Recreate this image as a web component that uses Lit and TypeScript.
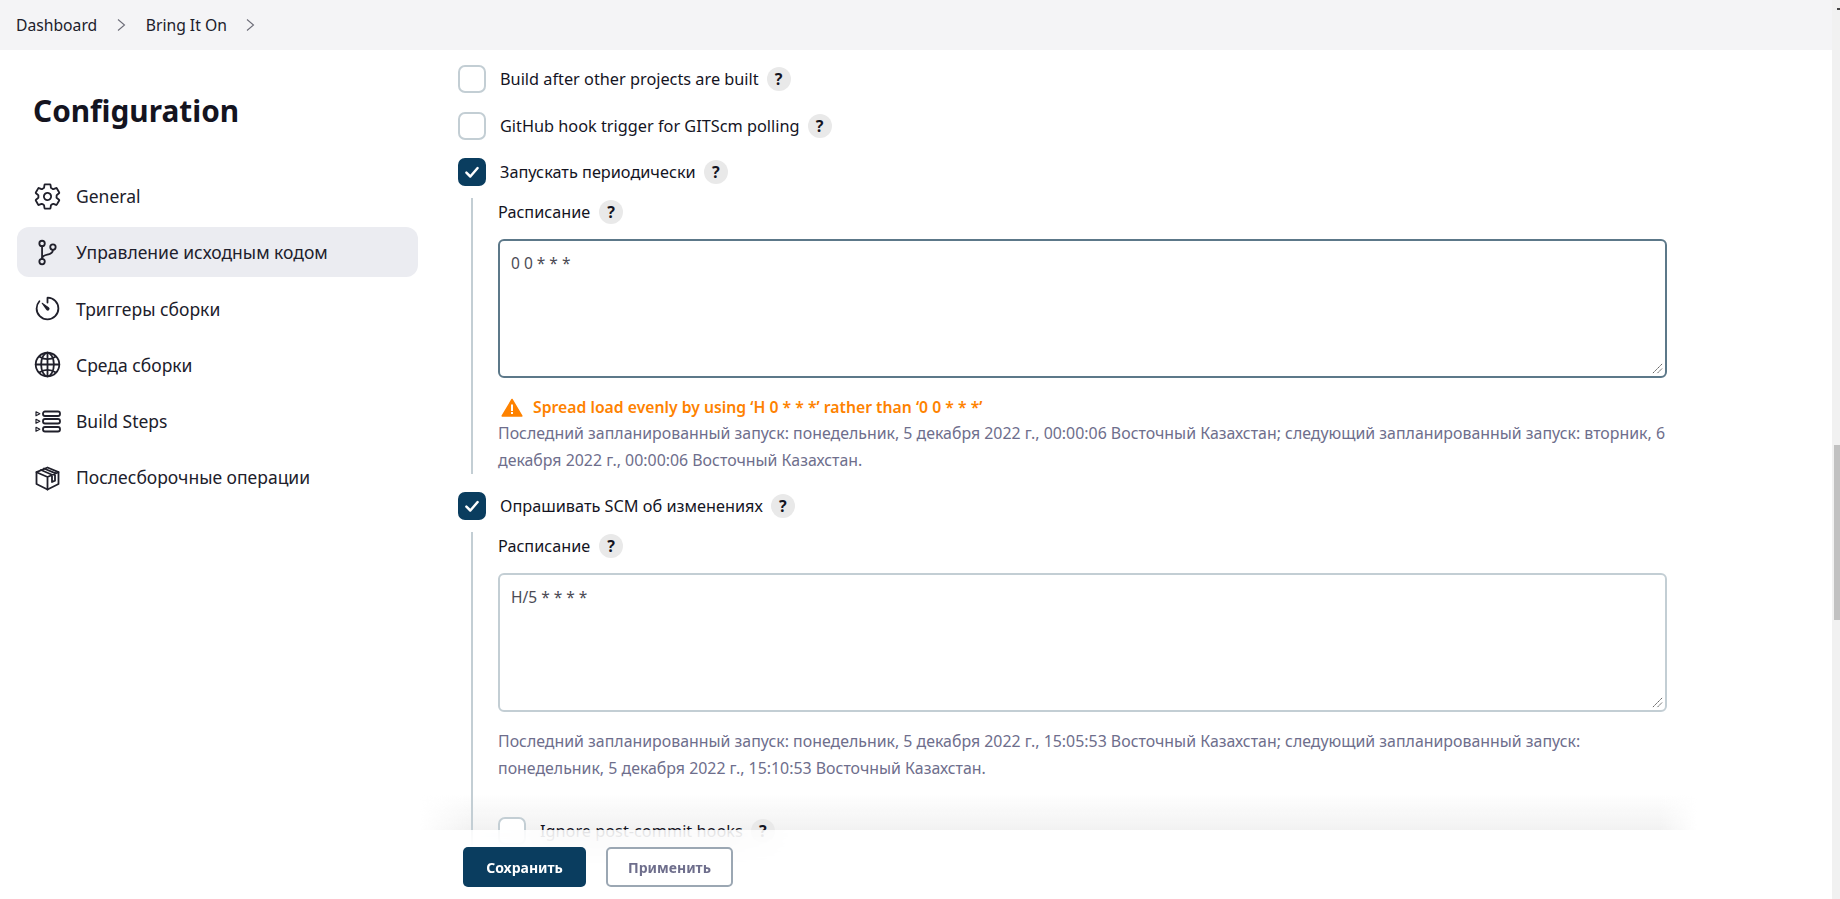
import { LitElement, html, css, svg } from 'lit';
import { customElement } from 'lit/decorators.js';

const ion = '0 0 512 512';
const icons: Record<string, { box: string; body: unknown }> = {
  gear: {
    box: ion,
    body: svg`<path d="M262.29 192.31a64 64 0 1057.4 57.4 64.13 64.13 0 00-57.4-57.4zM416.39 256a154.34 154.34 0 01-1.53 20.79l45.21 35.46a10.81 10.81 0 012.45 13.75l-42.77 74a10.81 10.81 0 01-13.14 4.59l-44.9-18.08a16.11 16.11 0 00-15.17 1.75A164.48 164.48 0 01325 400.8a15.94 15.94 0 00-8.82 12.14l-6.73 47.89a11.08 11.08 0 01-10.68 9.17h-85.54a11.11 11.11 0 01-10.69-8.87l-6.72-47.82a16.07 16.07 0 00-9-12.22 155.3 155.3 0 01-21.46-12.57 16 16 0 00-15.11-1.71l-44.89 18.07a10.81 10.81 0 01-13.14-4.58l-42.77-74a10.8 10.8 0 012.45-13.75l38.21-30a16.05 16.05 0 006-14.08c-.36-4.17-.58-8.33-.58-12.5s.21-8.27.58-12.35a16 16 0 00-6.07-13.94l-38.19-30A10.81 10.81 0 0149.48 186l42.77-74a10.81 10.81 0 0113.14-4.59l44.9 18.08a16.11 16.11 0 0015.17-1.75A164.48 164.48 0 01187 111.2a15.94 15.94 0 008.82-12.14l6.73-47.89A11.08 11.08 0 01213.23 42h85.54a11.11 11.11 0 0110.69 8.87l6.72 47.82a16.07 16.07 0 009 12.22 155.3 155.3 0 0121.46 12.57 16 16 0 0015.11 1.71l44.89-18.07a10.81 10.81 0 0113.14 4.58l42.77 74a10.8 10.8 0 01-2.45 13.75l-38.21 30a16.05 16.05 0 00-6.05 14.08c.33 4.14.55 8.3.55 12.47z"/>`,
  },
  branch: {
    box: ion,
    body: svg`<circle cx="160" cy="96" r="48"/><circle cx="160" cy="416" r="48"/><path d="M160 368V144"/><circle cx="352" cy="160" r="48"/><path d="M352 208c0 128-192 48-192 160"/>`,
  },
  timer: {
    box: ion,
    body: svg`<path d="M112.91 128A191.85 191.85 0 0064 254c-1.18 106.35 85.65 193.8 192 194 106.2.2 192-85.83 192-192 0-104.54-83.55-189.61-187.5-192a4.36 4.36 0 00-4.5 4.37V152"/><path fill="#20202b" stroke="none" d="M233.38 278.63l-79-113a8.13 8.13 0 0111.32-11.32l113 79a32.5 32.5 0 01-37.25 53.26 33.21 33.21 0 01-8.07-8.06z"/>`,
  },
  globe: {
    box: ion,
    body: svg`<path d="M256 48C141.13 48 48 141.13 48 256s93.13 208 208 208 208-93.13 208-208S370.87 48 256 48z"/><path d="M256 48c-58.07 0-112.67 93.13-112.67 208S197.93 464 256 464s112.67-93.13 112.67-208S314.07 48 256 48z"/><path d="M117.33 117.33c38.24 27.15 86.38 43.34 138.67 43.34s100.43-16.19 138.67-43.34M394.67 394.67c-38.24-27.15-86.38-43.34-138.67-43.34s-100.43 16.19-138.67 43.34"/><path d="M256 48v416M464 256H48"/>`,
  },
  steps: {
    box: '0 0 29 29',
    body: svg`<rect x="10" y="4.500" width="17" height="4.500" rx="2"/><rect x="10" y="12" width="17" height="4.500" rx="2"/><rect x="10" y="20" width="17" height="4.500" rx="2"/><path stroke-width="1.200" d="M3 4.800l3.800 2-3.800 2zM3 12.300l3.800 2-3.800 2zM3 20.300l3.800 2-3.800 2z"/>`,
  },
  box: {
    box: '0 0 29 29',
    body: svg`<path d="M14.500 4.500l11 4.700V21l-11 5.500L3.500 21V9.200z"/><path d="M3.500 9.200l11 4.800 11-4.800M14.500 14v12.500M8 7l11 4.800V19l3-1.300v-7.600L11 5.500"/>`,
  },
};

const navItems = [
  { icon: 'gear', label: 'General' },
  { icon: 'branch', label: 'Управление исходным кодом', active: true },
  { icon: 'timer', label: 'Триггеры сборки' },
  { icon: 'globe', label: 'Среда сборки' },
  { icon: 'steps', label: 'Build Steps' },
  { icon: 'box', label: 'Послесборочные операции' },
];

@customElement('app-root')
export class AppRoot extends LitElement {
  static styles = css`
    :host {
      display: flex;
      width: 1840px;
      height: 899px;
      overflow: hidden;
      background: #fff;
      color: #14141f;
      font-family: 'Noto Sans', 'Open Sans', sans-serif;
      font-size: 16px;
    }
    .page {
      flex: 1;
      min-width: 0;
      display: flex;
      flex-direction: column;
      position: relative;
    }
    .scrollbar {
      width: 8px;
      background: #f1f1f1;
      display: flex;
      flex-direction: column;
      align-items: flex-end;
    }
    .arrow {
      width: 3px;
      height: 2px;
      margin-top: 8px;
      background: #444;
    }
    .thumb {
      width: 6px;
      height: 175px;
      margin-top: 435px;
      background: #c1c1c1;
    }
    .topbar {
      height: 50px;
      flex: none;
      display: flex;
      align-items: center;
      padding-left: 16px;
      background: #f4f4f6;
      font-size: 15.700px;
      color: #20202b;
    }
    .chev {
      width: 9px;
      height: 14px;
      margin: 0 20px 0 19.500px;
      fill: none;
      stroke: #6d6d78;
      stroke-width: 1.100;
    }
    .body {
      flex: 1;
      min-height: 0;
      display: flex;
      overflow: hidden;
      position: relative;
      z-index: 1;
    }
    .side {
      width: 418px;
      flex: none;
      padding: 41px 0 0 17px;
      box-sizing: border-box;
    }
    h1 {
      margin: 0 0 40px 16px;
      font-size: 29.800px;
      line-height: 40px;
      font-weight: 700;
    }
    nav {
      display: flex;
      flex-direction: column;
      gap: 6.300px;
    }
    .nav-item {
      height: 50px;
      display: flex;
      align-items: center;
      gap: 14.500px;
      padding-left: 15.500px;
      border-radius: 12px;
      font-size: 17.500px;
      color: #20202b;
    }
    .nav-item.active {
      background: #ebecf1;
    }
    .nav-item svg {
      width: 29px;
      height: 29px;
      flex: none;
      fill: none;
      stroke: #20202b;
      stroke-linecap: round;
      stroke-linejoin: round;
    }
    .nav-item svg.ion {
      stroke-width: 32;
    }
    .nav-item svg.px {
      stroke-width: 1.800;
    }
    main {
      flex: 1;
      min-width: 0;
      padding: 15px 165px 0 40px;
    }
    .row {
      height: 28px;
      display: flex;
      align-items: center;
      gap: 14px;
      margin-bottom: 18.700px;
    }
    .check {
      width: 24px;
      height: 24px;
      flex: none;
      border: 2px solid #c3ced4;
      border-radius: 7px;
      background: #fff;
      display: flex;
      align-items: center;
      justify-content: center;
    }
    .check.on {
      background: #0a3d5f;
      border-color: #0a3d5f;
    }
    .check svg {
      width: 18px;
      height: 18px;
      fill: none;
      stroke: #fff;
      stroke-width: 2.200;
      stroke-linecap: round;
      stroke-linejoin: round;
    }
    .label {
      display: flex;
      align-items: center;
      gap: 8px;
      font-size: 16.300px;
    }
    .help {
      width: 24px;
      height: 24px;
      flex: none;
      display: flex;
      align-items: center;
      justify-content: center;
      border-radius: 50%;
      background: #e9e9e9;
      font-size: 16px;
      font-weight: 700;
      color: #14141f;
    }
    .nested {
      margin-left: 13px;
      padding-left: 25px;
      border-left: 2px solid #c3ced4;
    }
    .nested.first {
      margin-top: -7px;
      margin-bottom: 18px;
    }
    .nested.second {
      margin-top: -6.700px;
    }
    .nested.second .row {
      margin: 35px 0 0;
    }
    .field-label {
      height: 28px;
      display: flex;
      align-items: center;
      gap: 9px;
      margin-bottom: 13px;
      font-size: 16.200px;
    }
    .area {
      height: 139px;
      box-sizing: border-box;
      border: 2px solid #c3ced4;
      border-radius: 6px;
      padding: 12px 11px;
      font-size: 15.500px;
      line-height: 20px;
      color: #4b4b55;
      position: relative;
    }
    .area.focus {
      border-color: #5c7889;
    }
    .grip {
      position: absolute;
      right: 2px;
      bottom: 2px;
      width: 11px;
      height: 11px;
      fill: none;
      stroke: #555;
      stroke-width: 1;
      stroke-dasharray: 2 0.500;
    }
    .warn {
      display: flex;
      align-items: center;
      gap: 10px;
      margin-top: 17px;
      padding-left: 3px;
      height: 24px;
      color: #fe8200;
      font-size: 15.750px;
      font-weight: 600;
    }
    .warn svg {
      width: 22px;
      height: 19px;
      flex: none;
      fill: #fe8200;
      stroke: #fe8200;
      stroke-width: 1.500;
      stroke-linejoin: round;
    }
    .warn svg rect {
      fill: #fff;
      stroke: none;
    }
    .note {
      color: #6e6e8c;
      font-size: 15.900px;
      line-height: 27px;
    }
    .nested.first .note {
      padding-top: 1px;
    }
    .note.after {
      margin-top: 16px;
    }
    .fade {
      position: absolute;
      left: 420px;
      width: 1277px;
      top: 793px;
      height: 37px;
      background: linear-gradient(to bottom, rgba(240, 240, 240, 0), #f2f2f2);
      mask-image: linear-gradient(to right, transparent, #000 50px, #000 calc(100% - 37px), transparent);
    }
    .footer {
      position: absolute;
      z-index: 2;
      left: 0;
      right: 0;
      bottom: 0;
      height: 69px;
      box-sizing: border-box;
      padding: 17px 0 0 463px;
      display: flex;
      gap: 20px;
      background: rgba(255, 255, 255, 0.75);
      backdrop-filter: blur(16px);
    }
    .btn {
      height: 40px;
      box-sizing: border-box;
      border-radius: 5px;
      display: flex;
      align-items: center;
      justify-content: center;
      font-size: 14px;
      font-weight: 700;
    }
    .btn.save {
      width: 123px;
      background: #0a3d5f;
      color: #fff;
    }
    .btn.apply {
      width: 127px;
      border: 2px solid #9ba7b3;
      color: #6e6e8c;
      background: #fff;
    }
  `;

  private help() {
    return html`<span class="help">?</span>`;
  }

  private checkRow(label: string, on = false) {
    return html`<div class="row">
      <span class="check ${on ? 'on' : ''}">
        ${on ? html`<svg viewBox="0 0 16 16"><path d="M3 8.500l3.500 3.500L13 4.500"/></svg>` : ''}
      </span>
      <span class="label">${label} ${this.help()}</span>
    </div>`;
  }

  private area(value: string, focus = false) {
    return html`<div class="area ${focus ? 'focus' : ''}">
      ${value}
      <svg class="grip" viewBox="0 0 12 12"><path d="M1 11L11 1M6 11l5-5"/></svg>
    </div>`;
  }

  render() {
    return html`
      <div class="page">
        <div class="fade"></div>
        <div class="topbar">
          <span>Dashboard</span>
          <svg class="chev" viewBox="0 0 9 14"><path d="M1 1.500l6.500 5.500-6.500 5.500"/></svg>
          <span>Bring It On</span>
          <svg class="chev" viewBox="0 0 9 14"><path d="M1 1.500l6.500 5.500-6.500 5.500"/></svg>
        </div>
        <div class="body">
          <div class="side">
            <h1>Configuration</h1>
            <nav>
              ${navItems.map((n) => {
                const icon = icons[n.icon];
                return html`<div class="nav-item ${n.active ? 'active' : ''}">
                  <svg class="${icon.box === ion ? 'ion' : 'px'}" viewBox="${icon.box}">${icon.body}</svg>
                  <span>${n.label}</span>
                </div>`;
              })}
            </nav>
          </div>
          <main>
            ${this.checkRow('Build after other projects are built')}
            ${this.checkRow('GitHub hook trigger for GITScm polling')}
            ${this.checkRow('Запускать периодически', true)}
            <div class="nested first">
              <div class="field-label">Расписание ${this.help()}</div>
              ${this.area('0 0 * * *', true)}
              <div class="warn">
                <svg viewBox="0 0 22 19"><path d="M11 1.500L20.800 18H1.200z"/><rect x="10" y="6.500" width="2" height="6.500"/><rect x="10" y="14" width="2" height="2"/></svg>
                Spread load evenly by using ‘H 0 * * *’ rather than ‘0 0 * * *’
              </div>
              <div class="note">
                Последний запланированный запуск: понедельник, 5 декабря 2022 г., 00:00:06 Восточный Казахстан; следующий запланированный запуск: вторник, 6 декабря 2022 г., 00:00:06 Восточный Казахстан.
              </div>
            </div>
            ${this.checkRow('Опрашивать SCM об изменениях', true)}
            <div class="nested second">
              <div class="field-label">Расписание ${this.help()}</div>
              ${this.area('H/5 * * * *')}
              <div class="note after">
                Последний запланированный запуск: понедельник, 5 декабря 2022 г., 15:05:53 Восточный Казахстан; следующий запланированный запуск: понедельник, 5 декабря 2022 г., 15:10:53 Восточный Казахстан.
              </div>
              ${this.checkRow('Ignore post-commit hooks')}
            </div>
          </main>
        </div>
        <div class="footer">
          <div class="btn save">Сохранить</div>
          <div class="btn apply">Применить</div>
        </div>
      </div>
      <div class="scrollbar"><div class="arrow"></div><div class="thumb"></div></div>
    `;
  }
}
